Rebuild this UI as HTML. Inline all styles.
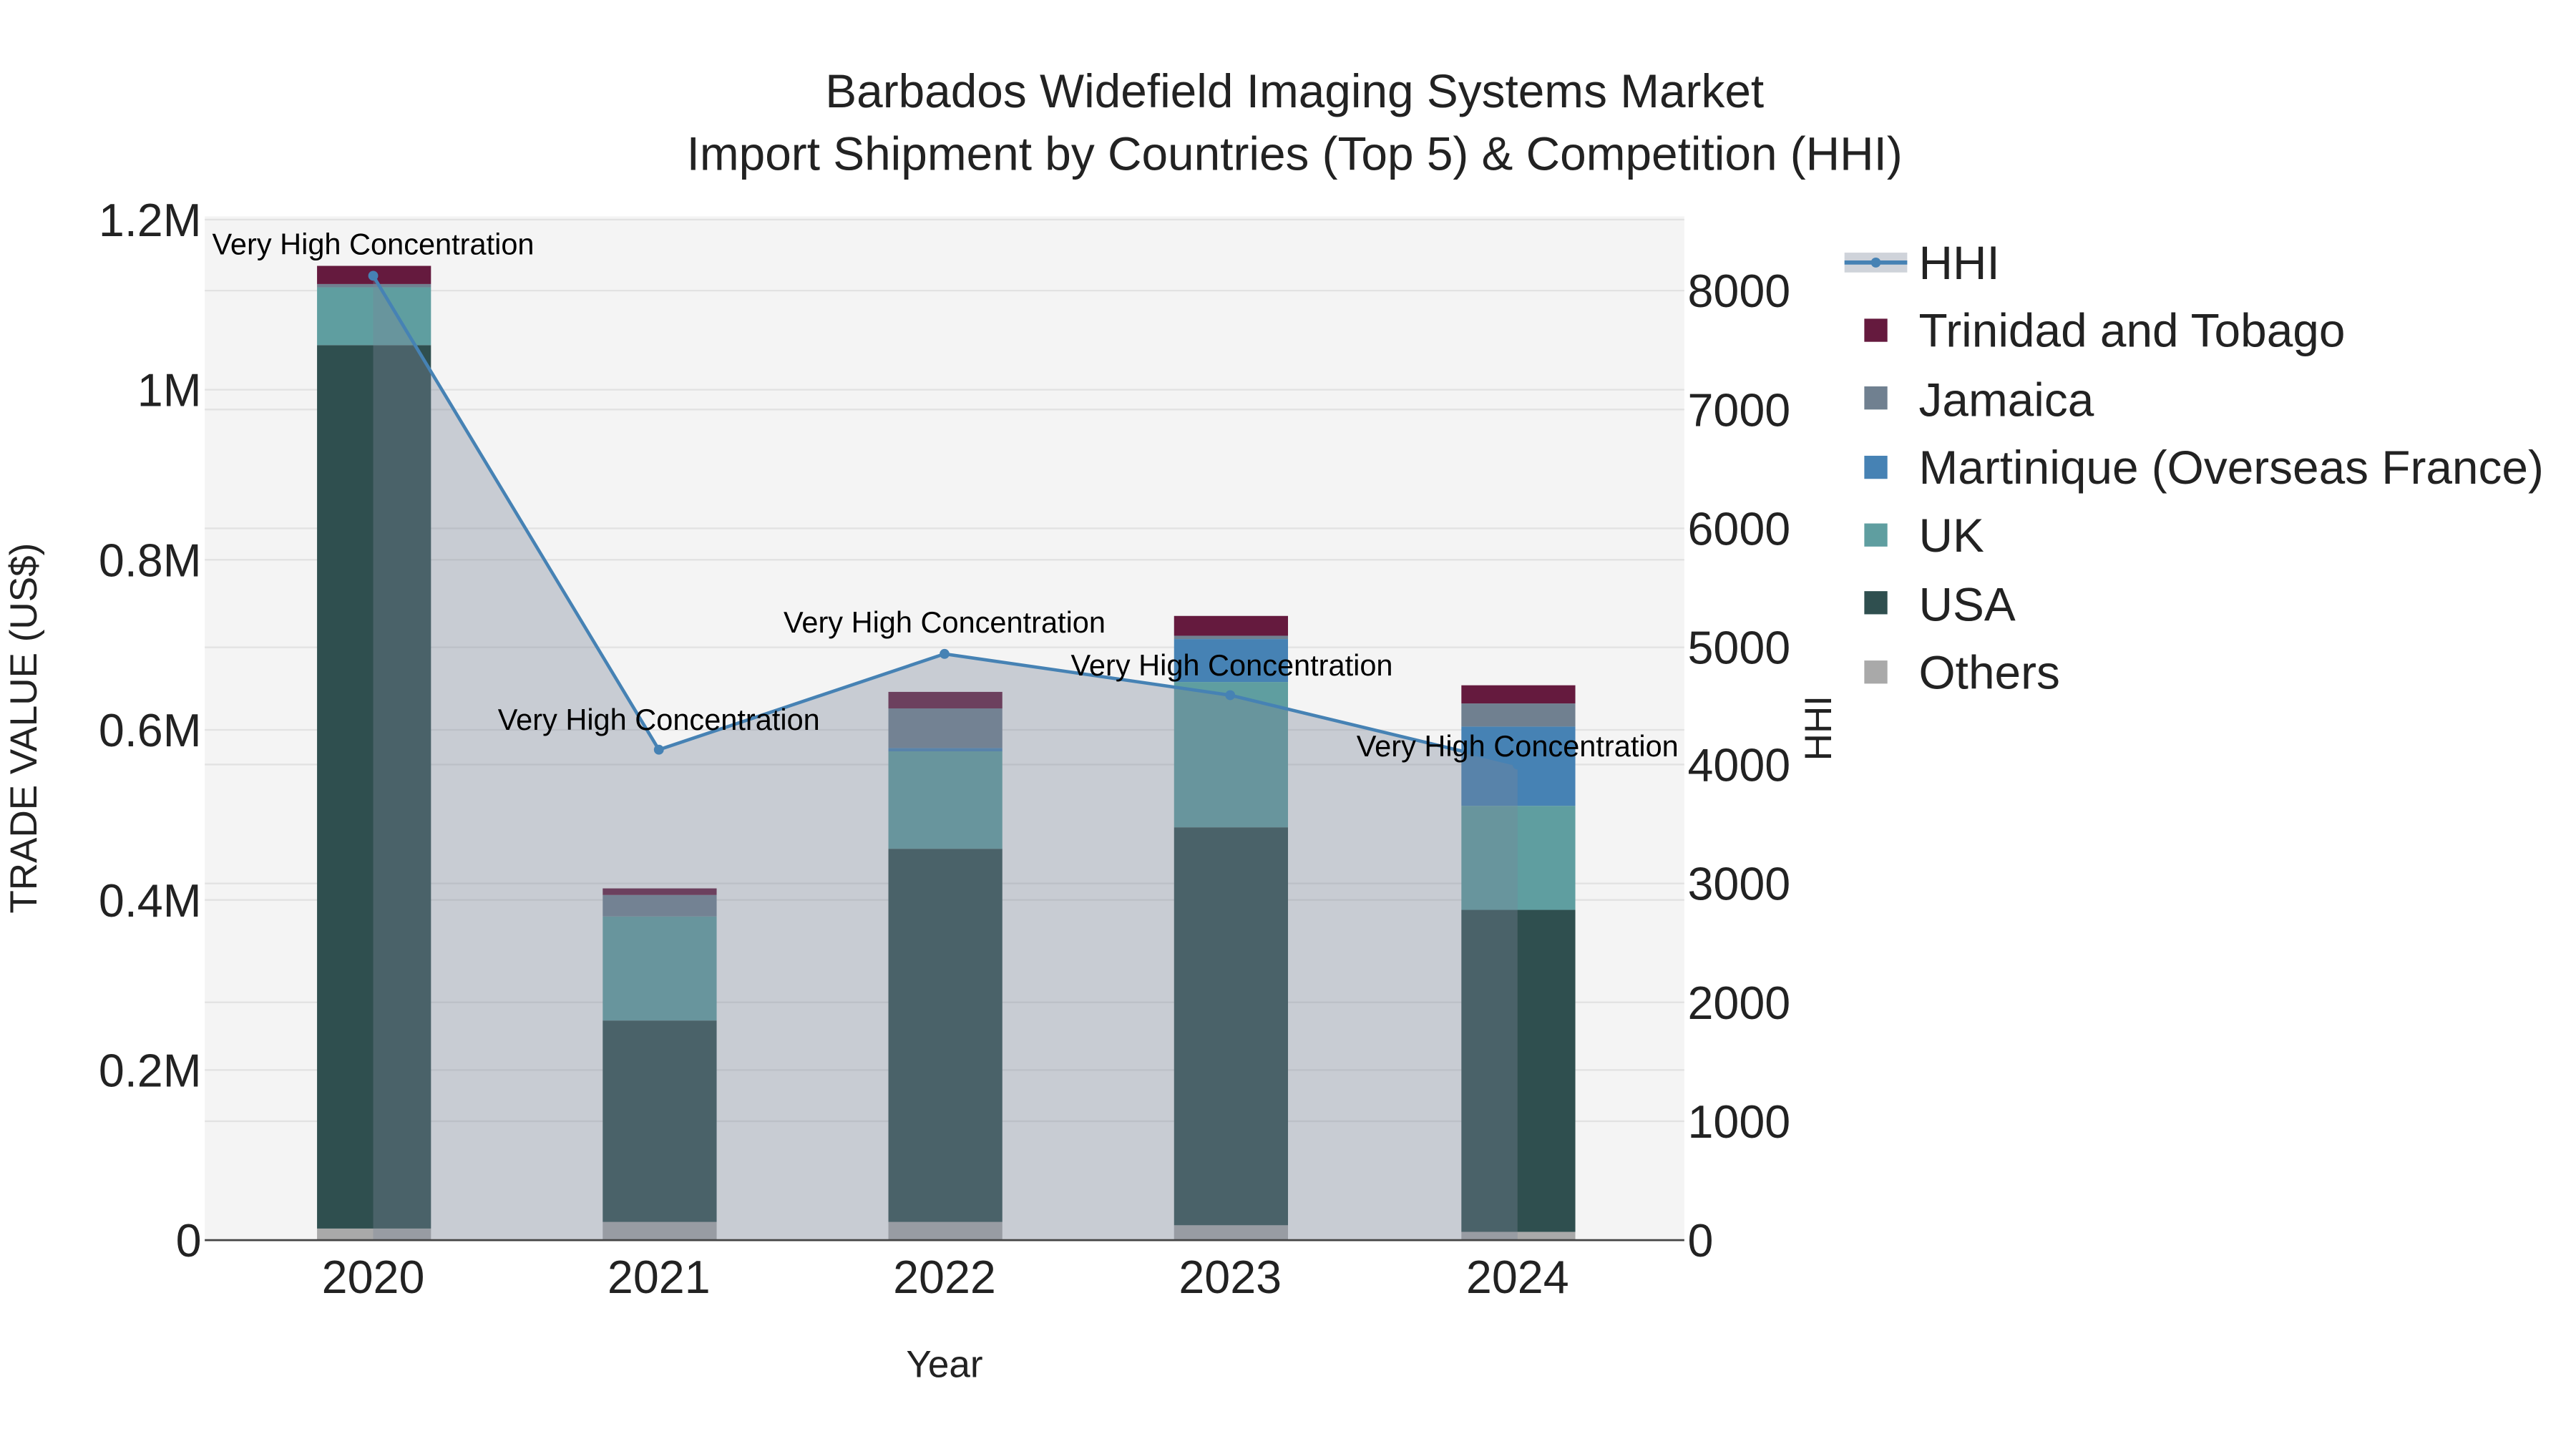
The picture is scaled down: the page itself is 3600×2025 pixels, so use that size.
<!DOCTYPE html>
<html><head><meta charset="utf-8"><style>
html,body{margin:0;padding:0;background:#fff;}
svg{display:block;font-family:"Liberation Sans",Arial,sans-serif;}
</style></head><body>
<svg width="3600" height="2025" viewBox="0 0 1560 877.5" xmlns="http://www.w3.org/2000/svg">
<rect width="1560" height="877.5" fill="#fff"/>
<rect x="124" y="131" width="896" height="620" fill="#f4f4f4"/>
<g stroke="#e2e2e2" stroke-width="1">
<line x1="124" x2="1020" y1="648" y2="648"/><line x1="124" x2="1020" y1="545" y2="545"/>
<line x1="124" x2="1020" y1="442" y2="442"/><line x1="124" x2="1020" y1="339" y2="339"/>
<line x1="124" x2="1020" y1="236" y2="236"/><line x1="124" x2="1020" y1="133" y2="133"/>
<line x1="124" x2="1020" y1="679" y2="679"/><line x1="124" x2="1020" y1="607" y2="607"/>
<line x1="124" x2="1020" y1="535" y2="535"/><line x1="124" x2="1020" y1="463" y2="463"/>
<line x1="124" x2="1020" y1="392" y2="392"/><line x1="124" x2="1020" y1="320" y2="320"/>
<line x1="124" x2="1020" y1="248" y2="248"/><line x1="124" x2="1020" y1="176" y2="176"/>
</g>
<g>
<rect x="192" y="744" width="69" height="7" fill="#a9a9a9"/>
<rect x="192" y="209" width="69" height="535" fill="#2f4f4f"/>
<rect x="192" y="174" width="69" height="35" fill="#5f9ea0"/>
<rect x="192" y="172" width="69" height="2" fill="#708090"/>
<rect x="192" y="161" width="69" height="11" fill="#651a3e"/>

<rect x="365" y="740" width="69" height="11" fill="#a9a9a9"/>
<rect x="365" y="618" width="69" height="122" fill="#2f4f4f"/>
<rect x="365" y="555" width="69" height="63" fill="#5f9ea0"/>
<rect x="365" y="542" width="69" height="13" fill="#708090"/>
<rect x="365" y="538" width="69" height="4" fill="#651a3e"/>

<rect x="538" y="740" width="69" height="11" fill="#a9a9a9"/>
<rect x="538" y="514" width="69" height="226" fill="#2f4f4f"/>
<rect x="538" y="455" width="69" height="59" fill="#5f9ea0"/>
<rect x="538" y="453" width="69" height="2" fill="#4682b4"/>
<rect x="538" y="429" width="69" height="24" fill="#708090"/>
<rect x="538" y="419" width="69" height="10" fill="#651a3e"/>

<rect x="711" y="742" width="69" height="9" fill="#a9a9a9"/>
<rect x="711" y="501" width="69" height="241" fill="#2f4f4f"/>
<rect x="711" y="413" width="69" height="88" fill="#5f9ea0"/>
<rect x="711" y="387" width="69" height="26" fill="#4682b4"/>
<rect x="711" y="385" width="69" height="2" fill="#708090"/>
<rect x="711" y="373" width="69" height="12" fill="#651a3e"/>

<rect x="885" y="746" width="69" height="5" fill="#a9a9a9"/>
<rect x="885" y="551" width="69" height="195" fill="#2f4f4f"/>
<rect x="885" y="488" width="69" height="63" fill="#5f9ea0"/>
<rect x="885" y="440" width="69" height="48" fill="#4682b4"/>
<rect x="885" y="426" width="69" height="14" fill="#708090"/>
<rect x="885" y="415" width="69" height="11" fill="#651a3e"/>
</g>
<polygon points="226,751 226,167 399,454 572,396 745,421 919,463 919,751" fill="rgb(122,133,153)" fill-opacity="0.36"/>
<polyline points="226,167 399,454 572,396 745,421 919,463" fill="none" stroke="#4682b4" stroke-width="2"/>
<g fill="#4682b4"><circle cx="226" cy="167" r="3"/><circle cx="399" cy="454" r="3"/><circle cx="572" cy="396" r="3"/><circle cx="745" cy="421" r="3"/><circle cx="919" cy="463" r="3"/></g>
<line x1="124" x2="1020" y1="751" y2="751" stroke="#444" stroke-width="1.2"/>
<g font-size="18" fill="#000" text-anchor="middle">
<text x="226" y="154">Very High Concentration</text>
<text x="399" y="442">Very High Concentration</text>
<text x="572" y="383">Very High Concentration</text>
<text x="746" y="409">Very High Concentration</text>
<text x="919" y="458">Very High Concentration</text>
</g>
<g font-size="28.5" fill="#222" text-anchor="middle">
<text x="784" y="65">Barbados Widefield Imaging Systems Market</text>
<text x="784" y="103">Import Shipment by Countries (Top 5) &amp; Competition (HHI)</text>
</g>
<g font-size="28" fill="#222" text-anchor="end">
<text x="122" y="761">0</text><text x="122" y="658">0.2M</text><text x="122" y="555">0.4M</text>
<text x="122" y="452">0.6M</text><text x="122" y="349">0.8M</text><text x="122" y="246">1M</text><text x="122" y="143">1.2M</text>
</g>
<g font-size="28" fill="#222" text-anchor="start">
<text x="1022" y="761">0</text><text x="1022" y="689">1000</text><text x="1022" y="617">2000</text>
<text x="1022" y="545">3000</text><text x="1022" y="473">4000</text><text x="1022" y="402">5000</text>
<text x="1022" y="330">6000</text><text x="1022" y="258">7000</text><text x="1022" y="186">8000</text>
</g>
<g font-size="28" fill="#222" text-anchor="middle">
<text x="226" y="783">2020</text><text x="399" y="783">2021</text><text x="572" y="783">2022</text><text x="745" y="783">2023</text><text x="919" y="783">2024</text>
</g>
<text x="572" y="834" font-size="23" fill="#222" text-anchor="middle">Year</text>
<text transform="translate(22,441) rotate(-90)" font-size="23" fill="#222" text-anchor="middle">TRADE VALUE (US$)</text>
<text transform="translate(1109,441) rotate(-90)" font-size="23" fill="#222" text-anchor="middle">HHI</text>
<rect x="1117" y="153" width="38" height="12" fill="rgb(122,133,153)" fill-opacity="0.36"/>
<line x1="1117" x2="1155" y1="159" y2="159" stroke="#4682b4" stroke-width="2.5"/>
<circle cx="1136" cy="159" r="3" fill="#4682b4"/>
<rect x="1129" y="193" width="14" height="14" fill="#651a3e"/>
<rect x="1129" y="234" width="14" height="14" fill="#708090"/>
<rect x="1129" y="276" width="14" height="14" fill="#4682b4"/>
<rect x="1129" y="317" width="14" height="14" fill="#5f9ea0"/>
<rect x="1129" y="358" width="14" height="14" fill="#2f4f4f"/>
<rect x="1129" y="400" width="14" height="14" fill="#a9a9a9"/>
<g font-size="28.5" fill="#222">
<text x="1162" y="169">HHI</text>
<text x="1162" y="210">Trinidad and Tobago</text>
<text x="1162" y="252">Jamaica</text>
<text x="1162" y="293">Martinique (Overseas France)</text>
<text x="1162" y="334">UK</text>
<text x="1162" y="376">USA</text>
<text x="1162" y="417">Others</text>
</g>
</svg>
</body></html>
